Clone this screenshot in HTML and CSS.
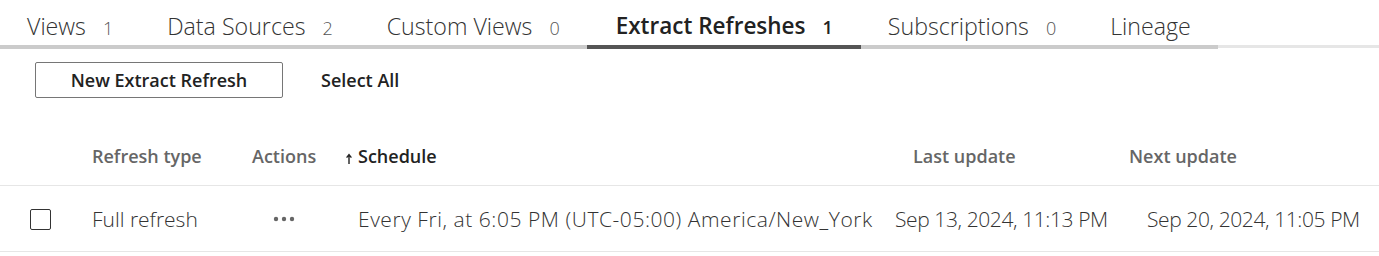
FILE: index.html
```html
<!DOCTYPE html>
<html lang="en">
<head>
<meta charset="utf-8">
<title>Extract Refreshes</title>
<link rel="stylesheet" href="styles.css">
</head>
<body>
<div class="tabbar">
  <nav class="tabs">
    <div class="tab"><span class="tab-label">Views</span><span class="tab-count">1</span></div>
    <div class="tab"><span class="tab-label">Data Sources</span><span class="tab-count">2</span></div>
    <div class="tab"><span class="tab-label">Custom Views</span><span class="tab-count">0</span></div>
    <div class="tab active"><span class="tab-label">Extract Refreshes</span><span class="tab-count">1</span></div>
    <div class="tab"><span class="tab-label">Subscriptions</span><span class="tab-count">0</span></div>
    <div class="tab"><span class="tab-label">Lineage</span></div>
  </nav>
</div>
<div class="toolbar">
  <button class="btn-outline">New Extract Refresh</button>
  <button class="btn-text">Select All</button>
</div>
<div class="table">
  <div class="row head">
    <div class="cell c-check"></div>
    <div class="cell c-type">Refresh type</div>
    <div class="cell c-actions">Actions</div>
    <div class="cell c-sched sorted"><svg class="arrow" width="13" height="11" viewBox="0 0 13 11"><path d="M4 11V2.5M1.6 4.6L4 1.6L6.4 4.6" fill="none" stroke="#222" stroke-width="1.4"/></svg>Schedule</div>
    <div class="cell c-last h-last">Last update</div>
    <div class="cell c-next h-next">Next update</div>
  </div>
  <div class="row data">
    <div class="cell c-check"><span class="checkbox"></span></div>
    <div class="cell c-type">Full refresh</div>
    <div class="cell c-actions"><svg class="dots" width="22" height="6" viewBox="0 0 22 6"><circle cx="3" cy="3" r="2.2"/><circle cx="11" cy="3" r="2.2"/><circle cx="19" cy="3" r="2.2"/></svg></div>
    <div class="cell c-sched sched-text">Every Fri, at 6:05 PM (UTC-05:00) America/New_York</div>
    <div class="cell c-last date">Sep 13, 2024, 11:13 PM</div>
    <div class="cell c-next date">Sep 20, 2024, 11:05 PM</div>
  </div>
</div>
</body>
</html>
```
FILE: styles.css
```css
* { box-sizing: border-box; }
body {
  margin: 0;
  background: #fff;
  font-family: "Open Sans", "Liberation Sans", sans-serif;
  color: #333;
}
.tabbar {
  border-bottom: 3px solid #e6e6e6;
  height: 48px;
}
.tabs {
  display: inline-flex;
  border-bottom: 4px solid #cbcbcb;
  height: 49px;
}
.tab {
  display: flex;
  align-items: baseline;
  padding: 11px 27px 0 27px;
  font-size: 23.2px;
  line-height: 30px;
  font-weight: 300;
  color: #333;
  margin-bottom: -4px;
  border-bottom: 4px solid transparent;
}
.tab-count {
  margin-left: 17px;
  font-size: 18px;
  color: #555;
}
.tab.active {
  border-bottom-color: #555;
  font-weight: 600;
  font-size: 22.5px;
  color: #222;
  padding-left: 29px;
  padding-right: 28px;
}
.tab.active .tab-count { color: #222; }
.toolbar {
  display: flex;
  align-items: center;
  padding: 14px 0 0 35px;
  gap: 19px;
}
.btn-outline, .btn-text {
  font-family: inherit;
  font-size: 18px;
  font-weight: 600;
  color: #222;
  background: #fff;
  height: 36px;
  cursor: pointer;
}
.btn-outline {
  border: 1px solid #767676;
  border-radius: 2px;
  padding: 0;
  width: 248px;
}
.btn-text {
  border: 0;
  padding: 0 19px;
}
.row {
  display: grid;
  grid-template-columns: 92px 160px 93px 550px 252px 1fr;
  border-bottom: 1px solid #e6e6e6;
}
.head {
  height: 88px;
  align-items: end;
  padding-bottom: 17px;
  font-size: 18px;
  line-height: 24px;
  font-weight: 600;
  color: #666;
}
.data {
  height: 66px;
  align-items: center;
  font-size: 21px;
  line-height: 26px;
  font-weight: 300;
  color: #333;
}
.cell { white-space: nowrap; }
.c-check { padding-left: 30px; display: flex; align-items: center; }
.c-sched { padding-left: 13px; }
.sorted { color: #222; }
.arrow {
  margin-left: -13px;
  vertical-align: -1px;
}
.sched-text { letter-spacing: 0.55px; }
.date { letter-spacing: -0.4px; }
.h-last { padding-left: 18px; }
.h-next { margin-left: -18px; }
.checkbox {
  display: block;
  width: 21px;
  height: 21px;
  border: 1px solid #333;
  border-radius: 2px;
  margin-top: 2px;
}
.data .c-actions { padding-left: 21px; display: flex; align-items: center; }
.dots { fill: #666; }
```
